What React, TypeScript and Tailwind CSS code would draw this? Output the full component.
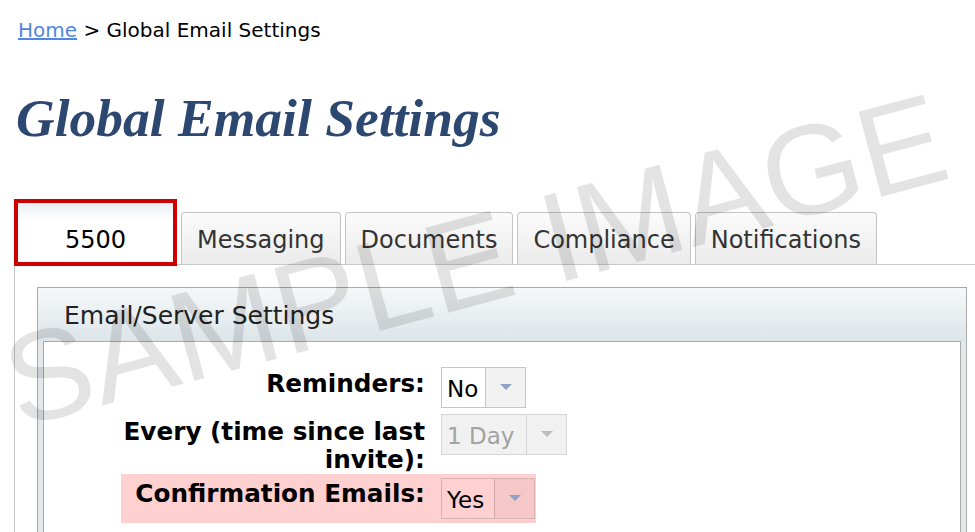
const tabs = ["Messaging", "Documents", "Compliance", "Notifications"];

type SelectProps = {
  value: string;
  textW: string;
  disabled?: boolean;
  tinted?: boolean;
};

const Select = ({ value, textW, disabled, tinted }: SelectProps) => {
  const border = disabled
    ? "border-[#d6d6d6]"
    : tinted
      ? "border-black/15"
      : "border-[#c6c6c6]";
  const bg = disabled ? "bg-[#f1f1f1]" : tinted ? "bg-transparent" : "bg-white";
  return (
    <div className={`flex h-[41px] border ${border} ${bg}`}>
      <div
        className={`${textW} pl-[5px] pt-[7px] text-[23px] leading-[28px] ${
          disabled ? "text-[#a2a2a2]" : "text-black"
        }`}
      >
        {value}
      </div>
      <div
        className={`flex w-[40px] items-center justify-center border-l ${border} ${
          disabled ? "bg-[#f1f1f1]" : tinted ? "bg-black/[0.04]" : "bg-[#f2f2f2]"
        }`}
      >
        <div
          className={`h-0 w-0 border-x-[6px] border-t-[6px] border-x-transparent ${
            disabled ? "border-t-[#bcbcbc]" : "border-t-[#8fa3c6]"
          }`}
        />
      </div>
    </div>
  );
};

const App = () => {
  return (
    <div className="relative h-[532px] w-[975px] overflow-hidden bg-white font-['DejaVu_Sans',sans-serif] text-black">
      <div className="pl-[18px] pt-[18px] text-[20px] leading-[24px]">
        <a href="#" className="text-[#4f86e6] underline">
          Home
        </a>{" "}
        &gt; Global Email Settings
      </div>

      <h1 className="mt-[50px] pl-[16px] font-['Liberation_Serif',serif] text-[53.5px] font-bold italic leading-none text-[#2c4770]">
        Global Email Settings
      </h1>

      <div className="mt-[53px] flex h-[65px] items-end gap-[4px] pl-[14px]">
        <div className="relative z-10 -mb-[2px] h-[67px] w-[163px] border-4 border-[#cc0000] bg-gradient-to-b from-[#e9eff3] via-white via-30% to-white pt-[23px] text-center text-[24px] leading-[28px]">
          5500
        </div>
        {tabs.map((t) => (
          <div
            key={t}
            className="h-[52px] rounded-t-[4px] border border-b-0 border-[#c4c4c4] bg-gradient-to-b from-[#fbfbfb] to-[#ebebeb] px-[15px] pt-[13px] text-[24px] leading-[28px] text-[#333]"
          >
            {t}
          </div>
        ))}
      </div>

      <div className="ml-[14px] w-[990px] border-l border-t border-[#c8c8c8] pl-[22px] pt-[22px]">
        <div className="w-[930px] border border-[#a9a9a9] bg-[#e2e8eb]">
          <div className="h-[53px] bg-gradient-to-b from-[#f5f8f9] to-[#dde5e9] pl-[26px] pt-[14px] text-[25px] leading-[28px] text-[#222]">
            Email/Server Settings
          </div>
          <div className="mx-[5px] h-[220px] border-x border-t border-[#aaaaaa] bg-white pl-[77px] pt-[25px]">
            <div className="flex items-start gap-[16px]">
              <div className="mt-[3px] w-[304px] whitespace-nowrap text-right text-[24.7px] font-bold leading-[28px]">
                Reminders:
              </div>
              <Select value="No" textW="w-[43px]" />
            </div>

            <div className="mt-[6px] flex items-start gap-[16px]">
              <div className="mt-[4px] w-[304px] whitespace-nowrap text-right text-[24.7px] font-bold leading-[28px]">
                Every (time since last
                <br />
                invite):
              </div>
              <Select value="1 Day" textW="w-[84px]" disabled />
            </div>

            <div className="flex w-[415px] items-start gap-[16px] bg-[#ffd0d0] py-[4px] pr-[1px]">
              <div className="mt-[2px] w-[304px] whitespace-nowrap text-right text-[24.7px] font-bold leading-[28px]">
                Confirmation Emails:
              </div>
              <Select value="Yes" textW="w-[52px]" tinted />
            </div>
          </div>
        </div>
      </div>

      <div className="pointer-events-none absolute left-[475px] top-[260px] -translate-x-1/2 -translate-y-1/2 -rotate-15 whitespace-nowrap font-['Liberation_Sans',sans-serif] text-[128px] leading-none text-black/[0.11]">
        SAMPLE IMAGE
      </div>
    </div>
  );
};

export default App;
